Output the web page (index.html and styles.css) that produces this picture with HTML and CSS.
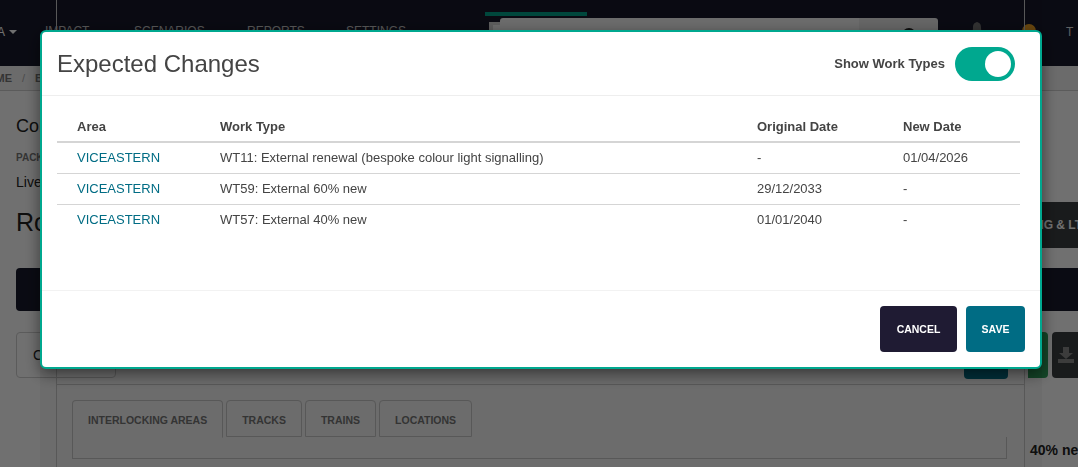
FILE: index.html
```html
<!DOCTYPE html>
<html lang="en">
<head>
  <meta charset="UTF-8">
  <meta name="viewport" content="width=device-width, initial-scale=1.0">
  <title>Expected Changes</title>
  <link rel="stylesheet" href="styles.css">
</head>
<body>
  <div class="page">
    <header class="topbar">
      <span class="nav-current">A <i class="caret"></i></span>
      <nav class="nav">
        <a class="nav-impact">IMPACT</a>
        <a class="nav-scenarios">SCENARIOS</a>
        <a class="nav-reports">REPORTS</a>
        <a class="nav-settings">SETTINGS</a>
      </nav>
      <div class="search-wrap">
        <div class="search-tab"></div>
        <div class="search-row">
          <span class="search-flag"></span>
          <div class="search">
            <span class="search-input"></span>
            <span class="search-btn">
              <svg width="20" height="20" viewBox="0 0 20 20" fill="none" stroke="#222" stroke-width="2"><circle cx="10" cy="10" r="6"/></svg>
            </span>
          </div>
        </div>
      </div>
      <svg class="bell" width="14" height="16" viewBox="0 0 14 16"><path d="M7 0C3.500 1 3 3 3 6c0 3-1 4-3 6h14c-2-2-3-3-3-6 0-3-.5-5-4-6z" fill="#777"/></svg>
      <span class="alert"></span>
      <span class="user">T</span>
    </header>

    <div class="crumbs"><span>HOME</span><span class="crumb-sep">/</span><span>BULK</span></div>

    <main class="content">
      <h2 class="pack-title">Configuration</h2>
      <div class="pack-label">PACKAGE</div>
      <div class="pack-value">Live</div>
      <div class="title-row">
        <h1 class="route-title">Route</h1>
        <button class="btn-dark">NG &amp; LT</button>
      </div>
      <div class="banner"></div>
      <div class="tools">
        <div class="filter">Clear</div>
        <div class="tool-btns">
          <span class="btn-green"></span>
          <span class="btn-download">
            <svg width="18" height="18" viewBox="0 0 18 18"><path d="M6 1h6v6h4l-7 6-7-6h4zM1 13h16v4H1z" fill="#8a8a8a"/></svg>
          </span>
        </div>
      </div>
    </main>

    <section class="drawer">
      <div class="drawer-inner">
        <span class="drawer-btn"></span>
        <div class="tabs">
          <span class="tab tab-active">INTERLOCKING AREAS</span>
          <span class="tab">TRACKS</span>
          <span class="tab">TRAINS</span>
          <span class="tab">LOCATIONS</span>
        </div>
        <div class="tab-body"></div>
      </div>
    </section>
    <div class="side-note">40% new</div>
  </div>

  <div class="backdrop"></div>

  <div class="modal">
    <div class="modal-head">
      <h3 class="modal-title">Expected Changes</h3>
      <label class="switch-row">
        <span>Show Work Types</span>
        <span class="switch"><span class="knob"></span></span>
      </label>
    </div>
    <div class="modal-body">
      <table class="changes">
        <thead>
          <tr>
            <th class="col-area">Area</th>
            <th class="col-type">Work Type</th>
            <th class="col-orig">Original Date</th>
            <th>New Date</th>
          </tr>
        </thead>
        <tbody>
          <tr>
            <td><a>VICEASTERN</a></td>
            <td>WT11: External renewal (bespoke colour light signalling)</td>
            <td>-</td>
            <td>01/04/2026</td>
          </tr>
          <tr>
            <td><a>VICEASTERN</a></td>
            <td>WT59: External 60% new</td>
            <td>29/12/2033</td>
            <td>-</td>
          </tr>
          <tr>
            <td><a>VICEASTERN</a></td>
            <td>WT57: External 40% new</td>
            <td>01/01/2040</td>
            <td>-</td>
          </tr>
        </tbody>
      </table>
    </div>
    <div class="modal-foot">
      <button class="btn btn-cancel">CANCEL</button>
      <button class="btn btn-save">SAVE</button>
    </div>
  </div>
</body>
</html>
```

FILE: styles.css
```css
* {
  box-sizing: border-box;
}

html, body {
  margin: 0;
  height: 467px;
  overflow: hidden;
}

body {
  font-family: 'Liberation Sans', Arial, sans-serif;
  color: #333;
  background: #fff;
}

/* page behind the modal */
.page {
  width: 1078px;
  height: 467px;
  overflow: hidden;
  position: relative;
  background: #fff;
}

.topbar {
  height: 66px;
  background: #181a2c;
  display: flex;
  position: relative;
  font-size: 12px;
  color: #fff;
}

.nav-current {
  margin-left: -3px;
  width: 48px;
  padding-top: 25px;
  font-size: 12px;
}

.caret {
  display: inline-block;
  width: 0;
  height: 0;
  margin-left: 1px;
  vertical-align: 2px;
  border-left: 4px solid transparent;
  border-right: 4px solid transparent;
  border-top: 4px solid #fff;
}

.nav {
  display: flex;
  padding-top: 24px;
  width: 442px;
}

.nav a {
  display: block;
  font-size: 12px;
  color: #ccc;
}

.nav-impact { width: 89px; }
.nav-scenarios { width: 113px; }
.nav-reports { width: 99px; }

.search-wrap {
  width: 453px;
  margin-left: -2px;
}

.search-tab {
  width: 102px;
  height: 4px;
  margin-top: 12px;
  background: #00a88f;
}

.search-row {
  display: flex;
  margin-top: 2px;
  margin-left: 4px;
}

.search-flag {
  width: 11px;
  height: 14px;
  margin-top: 4px;
  background: #fff;
  border-left: 4px solid #ddd;
  border-top: 3px solid #ddd;
}

.search {
  width: 438px;
  height: 30px;
  display: flex;
  border-radius: 3px;
  overflow: hidden;
}

.search-input {
  flex: 1;
  background: #fff;
}

.search-btn {
  width: 79px;
  padding: 7px 0 0 40px;
  background: #f2f2f2;
}

.bell {
  margin: 22px 0 0 32px;
}

.alert {
  width: 14px;
  height: 14px;
  margin: 24px 0 0 38px;
  border-radius: 50%;
  background: #f5a623;
}

.user {
  margin-left: 30px;
  padding-top: 25px;
  color: #ddd;
  font-size: 12px;
}

.crumbs {
  height: 25px;
  margin-left: -21px;
  padding-top: 6px;
  display: flex;
  border-bottom: 1px solid #d0d0d0;
  font-size: 11px;
  font-weight: bold;
  color: #777;
  background: #f4f4f4;
  width: 1100px;
  padding-left: 0;
}

.crumb-sep {
  margin: 0 10px;
  font-weight: normal;
  color: #aaa;
}

.content {
  padding: 24px 0 0 16px;
}

.pack-title {
  margin: 0;
  font-size: 18px;
  font-weight: normal;
  line-height: 22px;
  color: #222;
}

.pack-label {
  margin-top: 15px;
  font-size: 10px;
  font-weight: bold;
  line-height: 12px;
  color: #777;
}

.pack-value {
  margin-top: 10px;
  font-size: 14px;
  line-height: 16px;
  color: #222;
}

.title-row {
  display: flex;
  justify-content: space-between;
  margin-top: 12px;
  height: 46px;
}

.route-title {
  margin: 0;
  padding-top: 5px;
  font-size: 25px;
  font-weight: normal;
  line-height: 30px;
  color: #222;
}

.btn-dark {
  width: 100px;
  height: 46px;
  padding: 0 0 0 0;
  border: 0;
  background: #3a3e40;
  color: #fff;
  font: bold 12px 'Liberation Sans', Arial, sans-serif;
  text-align: left;
  padding-left: 57px;
  border-radius: 4px 0 0 4px;
  white-space: nowrap;
  overflow: hidden;
}

.banner {
  margin-top: 20px;
  height: 43px;
  background: #181a2c;
  border-radius: 4px 0 0 4px;
}

.tools {
  display: flex;
  justify-content: space-between;
  margin-top: 21px;
}

.filter {
  width: 100px;
  height: 46px;
  padding: 14px 0 0 16px;
  border: 1px solid #d0d0d0;
  border-radius: 4px;
  font-size: 14px;
  color: #222;
}

.tool-btns {
  display: flex;
  gap: 4px;
}

.btn-green {
  width: 20px;
  height: 46px;
  background: #2e9e5b;
  border-radius: 0 4px 4px 0;
}

.btn-download {
  width: 26px;
  height: 46px;
  padding: 14px 0 0 5px;
  background: #3a3e40;
  border-radius: 4px 0 0 4px;
}

/* slide-over panel, sits on top of the page content */
.drawer {
  position: absolute;
  left: 40px;
  top: 0;
  width: 1002px;
  height: 467px;
  padding-left: 16px;
  padding-right: 17px;
  background: rgba(0, 0, 0, 0.04);
}

.drawer-inner {
  height: 467px;
  margin-top: 0;
  padding: 400px 17px 0 15px;
  position: relative;
  border-left: 1px solid #c8c8c8;
  border-right: 1px solid #c8c8c8;
}

.drawer-inner::before {
  content: "";
  position: absolute;
  left: 0;
  right: 0;
  top: 384px;
  border-top: 1px solid #c8c8c8;
}

.drawer-btn {
  position: absolute;
  top: 340px;
  right: 16px;
  width: 44px;
  height: 39px;
  background: #006c84;
  border-radius: 4px;
}

.tabs {
  display: flex;
  gap: 3px;
  height: 37px;
}

.tab {
  height: 37px;
  padding: 13px 15px 0;
  border: 1px solid #c8c8c8;
  border-radius: 4px 4px 0 0;
  font-size: 10.500px;
  font-weight: bold;
  color: #777;
  white-space: nowrap;
}

.tab-active {
  border-bottom-color: transparent;
  height: 38px;
}

.tab-body {
  height: 22px;
  border: 1px solid #c8c8c8;
  border-top: 0;
}

.side-note {
  position: absolute;
  left: 1030px;
  top: 442px;
  font-size: 14px;
  font-weight: bold;
  color: #222;
  white-space: nowrap;
}

.backdrop {
  position: fixed;
  top: 0;
  left: 0;
  right: 0;
  bottom: 0;
  background: rgba(0, 0, 0, 0.56);
}

/* modal */
.modal {
  position: fixed;
  left: 40px;
  top: 30px;
  width: 1002px;
  height: 339px;
  display: flex;
  flex-direction: column;
  background: #fff;
  border: 2px solid #00a88f;
  border-radius: 6px;
  box-shadow: 0 5px 15px rgba(0, 0, 0, 0.5);
}

.modal-head {
  height: 64px;
  padding: 0 25px 0 15px;
  display: flex;
  justify-content: space-between;
  align-items: center;
  border-bottom: 1px solid #eee;
}

.modal-title {
  margin: 0;
  font-size: 24px;
  font-weight: normal;
  color: #444;
}

.switch-row {
  display: flex;
  align-items: center;
  gap: 10px;
  font-size: 13px;
  font-weight: bold;
  color: #444;
}

.switch {
  width: 60px;
  height: 34px;
  padding: 4px;
  display: flex;
  justify-content: flex-end;
  background: #00a88f;
  border-radius: 17px;
}

.knob {
  width: 26px;
  height: 26px;
  background: #fff;
  border-radius: 50%;
}

.modal-body {
  flex: 1;
  padding: 15px 20px 0 15px;
  border-bottom: 1px solid #f2f2f2;
}

.changes {
  width: 963px;
  border-collapse: collapse;
  table-layout: fixed;
  font-size: 13px;
  color: #444;
}

.changes th {
  height: 31px;
  padding: 0 0 0 0;
  text-align: left;
  font-weight: bold;
  border-bottom: 2px solid #d5d5d5;
}

.changes td {
  height: 31px;
  padding: 0;
  border-top: 1px solid #d5d5d5;
}

.changes th:first-child,
.changes td:first-child {
  padding-left: 20px;
}

.changes thead + tbody tr:first-child td {
  border-top: 0;
}

.col-area { width: 163px; }
.col-type { width: 537px; }
.col-orig { width: 146px; }

.changes a {
  color: #006c84;
}

.modal-foot {
  height: 76px;
  padding: 15px 15px 0 0;
  display: flex;
  justify-content: flex-end;
  gap: 9px;
}

.btn {
  height: 46px;
  border: 0;
  border-radius: 4px;
  color: #fff;
  font: bold 10.500px 'Liberation Sans', Arial, sans-serif;
}

.btn-cancel {
  width: 77px;
  background: #1f1b33;
}

.btn-save {
  width: 59px;
  background: #006c84;
}
```
